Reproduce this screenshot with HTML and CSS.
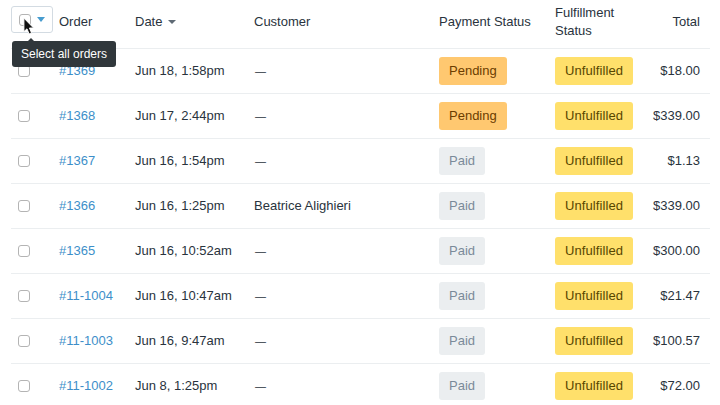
FILE: index.html
```html
<!DOCTYPE html>
<html lang="en">
<head>
<meta charset="utf-8">
<title>Orders</title>
<link rel="stylesheet" href="styles.css">
</head>
<body>
<div class="page">
<table class="orders">
<colgroup><col class="c1"><col class="c2"><col class="c3"><col class="c4"><col class="c5"><col class="c6"><col class="c7"></colgroup>
<thead>
<tr>
<th class="sel"><span class="select-btn"><span class="box"></span><svg class="caret-blue" width="8" height="5" viewBox="0 0 8 5"><path d="M0 0h8L4 5z"/></svg></span></th>
<th>Order</th>
<th>Date <svg class="caret-dark" width="8" height="4" viewBox="0 0 8 4"><path d="M0 0h8L4 4z"/></svg></th>
<th>Customer</th>
<th>Payment Status</th>
<th>Fulfillment<br>Status</th>
<th class="num">Total</th>
</tr>
</thead>
<tbody>
<tr><td class="sel"><span class="box"></span></td><td><a href="#">#1369</a></td><td>Jun 18, 1:58pm</td><td><span class="dash">—</span></td><td><span class="tag pending">Pending</span></td><td><span class="tag unfulfilled">Unfulfilled</span></td><td class="num">$18.00</td></tr>
<tr><td class="sel"><span class="box"></span></td><td><a href="#">#1368</a></td><td>Jun 17, 2:44pm</td><td><span class="dash">—</span></td><td><span class="tag pending">Pending</span></td><td><span class="tag unfulfilled">Unfulfilled</span></td><td class="num">$339.00</td></tr>
<tr><td class="sel"><span class="box"></span></td><td><a href="#">#1367</a></td><td>Jun 16, 1:54pm</td><td><span class="dash">—</span></td><td><span class="tag paid">Paid</span></td><td><span class="tag unfulfilled">Unfulfilled</span></td><td class="num">$1.13</td></tr>
<tr><td class="sel"><span class="box"></span></td><td><a href="#">#1366</a></td><td>Jun 16, 1:25pm</td><td>Beatrice Alighieri</td><td><span class="tag paid">Paid</span></td><td><span class="tag unfulfilled">Unfulfilled</span></td><td class="num">$339.00</td></tr>
<tr><td class="sel"><span class="box"></span></td><td><a href="#">#1365</a></td><td>Jun 16, 10:52am</td><td><span class="dash">—</span></td><td><span class="tag paid">Paid</span></td><td><span class="tag unfulfilled">Unfulfilled</span></td><td class="num">$300.00</td></tr>
<tr><td class="sel"><span class="box"></span></td><td><a href="#">#11-1004</a></td><td>Jun 16, 10:47am</td><td><span class="dash">—</span></td><td><span class="tag paid">Paid</span></td><td><span class="tag unfulfilled">Unfulfilled</span></td><td class="num">$21.47</td></tr>
<tr><td class="sel"><span class="box"></span></td><td><a href="#">#11-1003</a></td><td>Jun 16, 9:47am</td><td><span class="dash">—</span></td><td><span class="tag paid">Paid</span></td><td><span class="tag unfulfilled">Unfulfilled</span></td><td class="num">$100.57</td></tr>
<tr><td class="sel"><span class="box"></span></td><td><a href="#">#11-1002</a></td><td>Jun 8, 1:25pm</td><td><span class="dash">—</span></td><td><span class="tag paid">Paid</span></td><td><span class="tag unfulfilled">Unfulfilled</span></td><td class="num">$72.00</td></tr>
</tbody>
</table>
<div class="tooltip">Select all orders</div>
<svg class="cursor" width="13" height="19" viewBox="0 0 14 20"><path d="M1 1v14.500l3.300-3 2.300 5.500 2.600-1.100-2.300-5.300h4.500z" fill="#111" stroke="#fff" stroke-width="1"/></svg>
</div>
</body>
</html>
```
FILE: styles.css
```css
html, body { margin: 0; padding: 0; background: #fff; }
body { font-family: "Liberation Sans", Arial, sans-serif; font-size: 13px; color: #29333d; }
.page { position: relative; width: 720px; height: 405px; overflow: hidden; padding-left: 11px; box-sizing: border-box; }
.orders { width: 699px; table-layout: fixed; border-collapse: collapse; }
.c1 { width: 42px; } .c2 { width: 76px; } .c3 { width: 119px; } .c4 { width: 185px; }
.c5 { width: 116px; } .c6 { width: 90px; } .c7 { width: 71px; }
th, td { padding: 0 0 0 6px; text-align: left; font-weight: 400; white-space: nowrap; vertical-align: middle; border-bottom: 1px solid #ebeef0; line-height: 18px; }
th { box-sizing: border-box; height: 48px; padding-bottom: 4px; }
td { height: 44px; }
th.num, td.num { text-align: right; padding: 0 10px 0 0; }
th.num { padding-bottom: 4px; }
th.sel, td.sel { padding: 0; }
td.sel { padding-left: 7px; }
td.sel .box { display: block; }
.select-btn { display: flex; align-items: center; gap: 6px; width: 42px; height: 27px; box-sizing: border-box; border: 1px solid #d3dbe2; border-radius: 3px; padding-left: 7px; margin-top: -8px; }
.box { width: 12px; height: 12px; box-sizing: border-box; border: 1px solid #b4b4b4; border-radius: 3px; background: #fff; }
.caret-blue { fill: #479ccf; }
.caret-dark { fill: #5f6a75; margin-left: 2px; vertical-align: 2px; }
a { color: #3d8fc9; text-decoration: none; }
.dash { font-size: 11px; padding-left: 1px; }
.tag { display: inline-block; height: 28px; line-height: 28px; padding: 0 10px; border-radius: 3px; }
.pending { background: #ffc870; color: #6b3d00; }
.unfulfilled { background: #ffe06b; color: #574600; letter-spacing: 0.1px; }
.paid { background: #ebeef0; color: #7a8a99; }
.tooltip { position: absolute; left: 12px; top: 41px; height: 26px; line-height: 26px; padding: 0 9px; background: #30373b; color: #fff; border-radius: 3px; font-size: 12px; }
.tooltip::before { content: ""; position: absolute; left: 15px; top: -3px; border: 4px solid transparent; border-top: 0; border-bottom-color: #30373b; }
.cursor { position: absolute; left: 23px; top: 17px; }
```
